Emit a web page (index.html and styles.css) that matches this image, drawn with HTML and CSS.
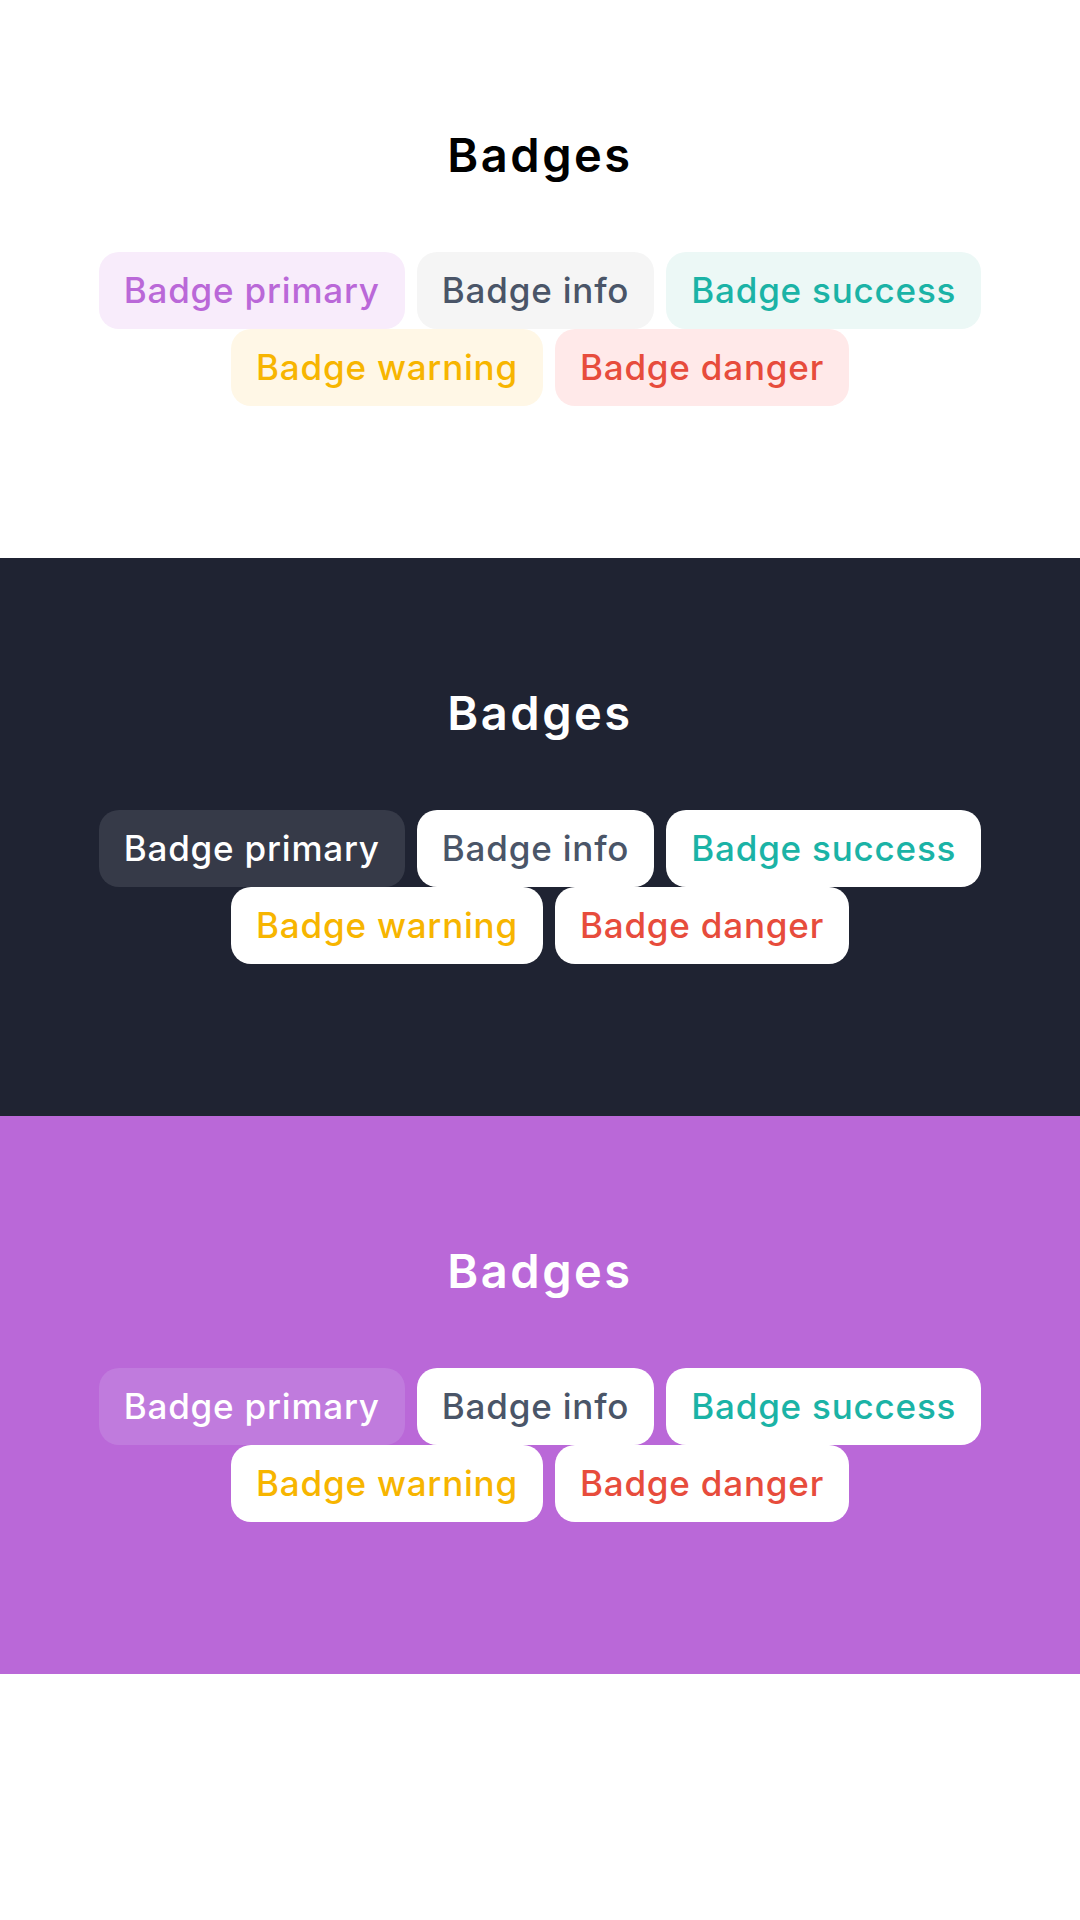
FILE: index.html
```html
<!DOCTYPE html>
<html>
<head>
<meta charset="utf-8">
<link rel="stylesheet" href="styles.css">
</head>
<body>
  <section class="block block-light">
    <h2 class="title">Badges</h2>
    <div class="badges">
      <span class="badge primary">Badge primary</span>
      <span class="badge info">Badge info</span>
      <span class="badge success">Badge success</span>
      <span class="badge warning">Badge warning</span>
      <span class="badge danger">Badge danger</span>
    </div>
  </section>
  <section class="block block-dark">
    <h2 class="title">Badges</h2>
    <div class="badges">
      <span class="badge primary">Badge primary</span>
      <span class="badge info">Badge info</span>
      <span class="badge success">Badge success</span>
      <span class="badge warning">Badge warning</span>
      <span class="badge danger">Badge danger</span>
    </div>
  </section>
  <section class="block block-purple">
    <h2 class="title">Badges</h2>
    <div class="badges">
      <span class="badge primary">Badge primary</span>
      <span class="badge info">Badge info</span>
      <span class="badge success">Badge success</span>
      <span class="badge warning">Badge warning</span>
      <span class="badge danger">Badge danger</span>
    </div>
  </section>
</body>
</html>
```

FILE: styles.css
```css
* { box-sizing: border-box; }
html, body { margin: 0; padding: 0; background: #ffffff; }
body { font-family: "Inter", "Lato", sans-serif; }

.block {
  height: 558px;
  padding-top: 127px;
  display: flex;
  flex-direction: column;
  align-items: center;
}
.title {
  margin: 0 0 69px;
  font-size: 47px;
  line-height: 56px;
  font-weight: 600;
  letter-spacing: 2.5px;
}
.badges {
  display: flex;
  flex-wrap: wrap;
  justify-content: center;
  column-gap: 12px;
  row-gap: 0;
  width: 100%;
}
.badge {
  display: inline-block;
  padding: 16px 25px;
  font-size: 35px;
  line-height: 45px;
  font-weight: 500;
  letter-spacing: 0.8px;
  border-radius: 20px;
  white-space: nowrap;
}

.block-light { background: #ffffff; }
.block-light .title { color: #000000; }
.block-light .primary { background: #f8ecfb; color: #ba68d8; }
.block-light .info { background: #f5f5f5; color: #4a5568; }
.block-light .success { background: #ecf8f6; color: #1bb3a6; }
.block-light .warning { background: #fff7e6; color: #f7b500; }
.block-light .danger { background: #ffe9e9; color: #e74c3c; }

.block-dark { background: #1f2332; }
.block-dark .title { color: #ffffff; }
.block-purple { background: #ba68d8; }
.block-purple .title { color: #ffffff; }

.block-dark .badge, .block-purple .badge { background: #ffffff; }
.block-dark .primary { background: #363a48; color: #ffffff; }
.block-purple .primary { background: #c07bdd; color: #ffffff; }
.block-dark .info, .block-purple .info { color: #4a5568; }
.block-dark .success, .block-purple .success { color: #1bb3a6; }
.block-dark .warning, .block-purple .warning { color: #f7b500; }
.block-dark .danger, .block-purple .danger { color: #e74c3c; }
```
